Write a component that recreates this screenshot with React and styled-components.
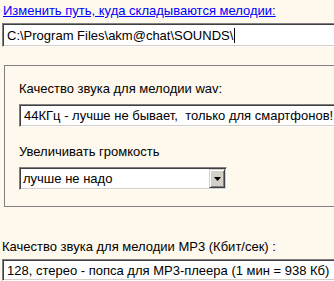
import React from 'react';
import styled, { createGlobalStyle } from 'styled-components';

const GlobalStyle = createGlobalStyle`
  html, body {
    margin: 0;
    padding: 0;
    background: #fff8ec;
  }
  body {
    font-family: "Liberation Sans", Arial, sans-serif;
    font-size: 13px;
    color: #000;
    overflow: hidden;
  }
`;

const Page = styled.div`
  width: 334px;
  height: 281px;
  overflow: hidden;
  padding: 3px 0 0 2px;
  box-sizing: border-box;
`;

const PathLink = styled.a`
  display: block;
  margin-left: 1px;
  color: #0000ff;
  text-decoration: underline;
  line-height: 16px;
  cursor: pointer;
`;

const TextField = styled.div`
  box-sizing: border-box;
  height: ${p => p.h || 24}px;
  width: ${p => p.w || '400px'};
  margin-top: ${p => p.mt || 0}px;
  background: #fff;
  border-top: 1px solid #808080;
  border-left: 1px solid #808080;
  border-bottom: 1px solid #fff;
  border-right: 1px solid #fff;
  box-shadow: inset 1px 1px 0 #404040, inset -1px -1px 0 #d4d0c8;
  padding: 0 4px;
  display: flex;
  align-items: center;
  white-space: nowrap;
  font-size: 13px;
`;

const Caret = styled.span`
  display: inline-block;
  width: 1px;
  height: 15px;
  background: #000;
  margin-left: 1px;
`;

const Group = styled.div`
  margin: 18px 0 0 2px;
  border-top: 1px solid #808080;
  border-left: 1px solid #808080;
  border-bottom: 1px solid #808080;
  height: 142px;
  box-sizing: border-box;
  padding: 15px 0 0 14px;
`;

const Label = styled.div`
  line-height: 16px;
  margin-top: ${p => p.mt || 0}px;
  white-space: nowrap;
`;

const Select = styled.div`
  box-sizing: border-box;
  display: flex;
  width: 208px;
  height: 23px;
  margin-top: 7px;
  background: #fff;
  border-top: 1px solid #808080;
  border-left: 1px solid #808080;
  border-bottom: 1px solid #fff;
  border-right: 1px solid #fff;
  box-shadow: inset 1px 1px 0 #404040, inset -1px -1px 0 #d4d0c8;
`;

const SelectValue = styled.div`
  flex: 1;
  display: flex;
  align-items: center;
  padding-left: 3px;
`;

const ArrowButton = styled.div`
  width: 16px;
  margin: 1px 1px 1px 0;
  background: #d4d0c8;
  box-sizing: border-box;
  border-top: 1px solid #d4d0c8;
  border-left: 1px solid #d4d0c8;
  border-bottom: 1px solid #404040;
  border-right: 1px solid #404040;
  box-shadow: inset 1px 1px 0 #fff, inset -1px -1px 0 #808080;
  display: flex;
  align-items: center;
  justify-content: center;
`;

export default function App() {
  return (
    <>
      <GlobalStyle />
      <Page>
        <PathLink>Изменить путь, куда складываются мелодии:</PathLink>
        <TextField mt={4} h={24}>
          C:\Program Files\akm@chat\SOUNDS\<Caret />
        </TextField>
        <Group>
          <Label>Качество звука для мелодии wav:</Label>
          <TextField mt={7} h={23}>
            44КГц - лучше не бывает,&nbsp; только для смартфонов!
          </TextField>
          <Label mt={17}>Увеличивать громкость</Label>
          <Select>
            <SelectValue>лучше не надо</SelectValue>
            <ArrowButton>
              <svg width="7" height="4" viewBox="0 0 7 4">
                <path d="M0 0h7L3.5 4z" fill="#000" />
              </svg>
            </ArrowButton>
          </Select>
        </Group>
        <Label mt={32}>Качество звука для мелодии MP3 (Кбит/сек) :</Label>
        <TextField mt={4} h={22}>
          128, стерео - попса для MP3-плеера (1 мин = 938 Кб)
        </TextField>
      </Page>
    </>
  );
}
